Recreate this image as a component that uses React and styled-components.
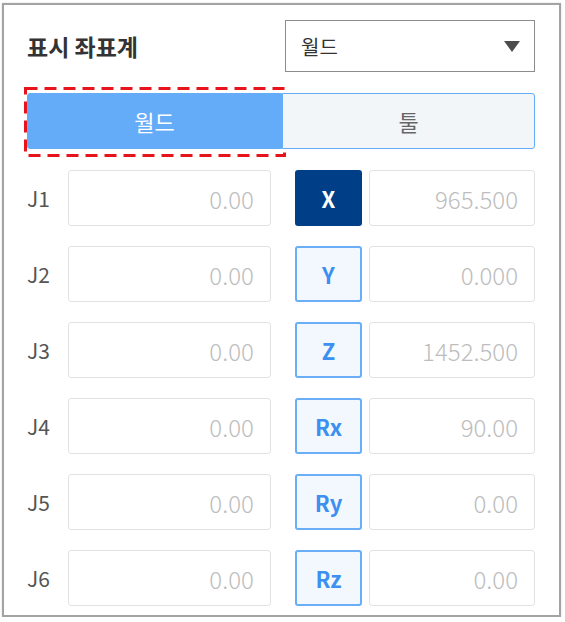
import React, { useState } from "react";
import styled, { createGlobalStyle } from "styled-components";

const GlobalStyle = createGlobalStyle`
  body {
    margin: 0;
    background: #ffffff;
    font-family: "Noto Sans CJK KR", "Noto Sans", sans-serif;
  }
`;

const Frame = styled.div`
  box-sizing: border-box;
  width: 559px;
  height: 614px;
  margin: 3px 0 0 2px;
  border: 2px solid #a3a3a3;
  box-shadow: 0 0 2px rgba(0, 0, 0, 0.15);
  padding: 15px 24px 0 23px;
  display: flex;
  flex-direction: column;
`;

const Header = styled.div`
  display: flex;
  align-items: center;
  justify-content: space-between;
  height: 52px;
`;

const Title = styled.h3`
  margin: 0;
  font-size: 23px;
  font-weight: 700;
  color: #333333;
`;

const Select = styled.div`
  box-sizing: border-box;
  width: 250px;
  height: 52px;
  border: 1px solid #8c8c8c;
  background: #fff;
  display: flex;
  align-items: center;
  justify-content: space-between;
  padding: 0 14px 0 15px;
  font-size: 20px;
  color: #333;
  cursor: pointer;
`;

const Toggle = styled.div`
  display: grid;
  grid-template-columns: 255px 1fr;
  height: 56px;
  margin-top: 21px;
`;

const ToggleButton = styled.button`
  position: relative;
  font-family: inherit;
  font-size: 22px;
  border: 1px solid #64acf8;
  background: ${({ $active }) => ($active ? "#64acf8" : "#f3f6f9")};
  color: ${({ $active }) => ($active ? "#ffffff" : "#666666")};
  border-radius: ${({ $side }) => ($side === "left" ? "3px 0 0 3px" : "0 3px 3px 0")};
  cursor: pointer;
`;

/* dashed red call-out drawn over the highlighted toggle */
const Callout = styled.svg`
  position: absolute;
  top: -7px;
  left: -4px;
  width: calc(100% + 9px);
  height: calc(100% + 16px);
  overflow: visible;
  pointer-events: none;
`;

const Rows = styled.div`
  display: flex;
  flex-direction: column;
  gap: 20px;
  margin-top: 21px;
`;

const Row = styled.div`
  display: flex;
  align-items: center;
  justify-content: space-between;
  height: 56px;
`;

const Group = styled.div`
  display: flex;
  align-items: center;
  gap: ${({ $gap }) => $gap}px;
`;

const JointLabel = styled.span`
  font-size: 21px;
  color: #555555;
`;

const ValueField = styled.input`
  box-sizing: border-box;
  width: ${({ $w }) => $w}px;
  height: 56px;
  border: 1px solid #e2e2e2;
  border-radius: 3px;
  background: #fff;
  font-family: inherit;
  font-size: 24px;
  font-weight: 300;
  color: #bdbdbd;
  text-align: right;
  padding: 0 16px 0 10px;
  outline: none;
`;

const AxisButton = styled.button`
  box-sizing: border-box;
  width: 67px;
  height: 56px;
  border-radius: 3px;
  border: 2px solid ${({ $active }) => ($active ? "#003f87" : "#6aaef8")};
  background: ${({ $active }) => ($active ? "#003f87" : "#f3f8ff")};
  color: ${({ $active }) => ($active ? "#ffffff" : "#3d8ff0")};
  font-family: inherit;
  font-size: 22px;
  font-weight: 700;
  cursor: pointer;
`;

const rows = [
  { joint: "J1", jv: "0.00", axis: "X", av: "965.500" },
  { joint: "J2", jv: "0.00", axis: "Y", av: "0.000" },
  { joint: "J3", jv: "0.00", axis: "Z", av: "1452.500" },
  { joint: "J4", jv: "0.00", axis: "Rx", av: "90.00" },
  { joint: "J5", jv: "0.00", axis: "Ry", av: "0.00" },
  { joint: "J6", jv: "0.00", axis: "Rz", av: "0.00" },
];

const CaretDown = () => (
  <svg width="16" height="11" viewBox="0 0 16 11">
    <path d="M0 0 H16 L8 11 Z" fill="#4d4d4d" />
  </svg>
);

export default function App() {
  const [frame, setFrame] = useState("world");
  const [axis, setAxis] = useState("X");

  return (
    <>
      <GlobalStyle />
      <Frame>
        <Header>
          <Title>표시 좌표계</Title>
          <Select>
            <span>월드</span>
            <CaretDown />
          </Select>
        </Header>

        <Toggle>
          <ToggleButton
            $side="left"
            $active={frame === "world"}
            onClick={() => setFrame("world")}
          >
            월드
            <Callout>
              <rect
                x="1.5"
                y="1.5"
                width="calc(100% - 3px)"
                height="calc(100% - 3px)"
                style={{ width: "calc(100% - 3px)", height: "calc(100% - 3px)" }}
                fill="none"
                stroke="#e8141b"
                strokeWidth="3"
                strokeDasharray="12 7"
              />
            </Callout>
          </ToggleButton>
          <ToggleButton
            $side="right"
            $active={frame === "tool"}
            onClick={() => setFrame("tool")}
          >
            툴
          </ToggleButton>
        </Toggle>

        <Rows>
          {rows.map((r) => (
            <Row key={r.joint}>
              <Group $gap={18}>
                <JointLabel>{r.joint}</JointLabel>
                <ValueField $w={203} value={r.jv} readOnly />
              </Group>
              <Group $gap={7}>
                <AxisButton $active={axis === r.axis} onClick={() => setAxis(r.axis)}>
                  {r.axis}
                </AxisButton>
                <ValueField $w={166} value={r.av} readOnly />
              </Group>
            </Row>
          ))}
        </Rows>
      </Frame>
    </>
  );
}
